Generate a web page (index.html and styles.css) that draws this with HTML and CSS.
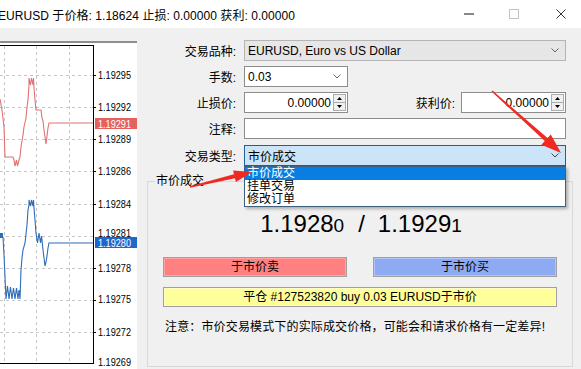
FILE: index.html
```html
<!DOCTYPE html>
<html lang="zh-CN">
<head>
<meta charset="utf-8">
<title>EURUSD</title>
<link rel="stylesheet" href="styles.css">
</head>
<body>
<div class="titlebar">
  <span class="title">EURUSD 于价格: 1.18624 止损: 0.00000 获利: 0.00000</span>
  <div class="controls">
    <svg class="ctl-min" width="10" height="2" viewBox="0 0 10 2"><line x1="0" y1="1" x2="10" y2="1" stroke="#111" stroke-width="1"/></svg>
    <svg class="ctl-max" width="10" height="10" viewBox="0 0 10 10"><rect x="0.5" y="0.5" width="9" height="9" fill="none" stroke="#c4c4c4" stroke-width="1"/></svg>
    <svg class="ctl-close" width="10" height="10" viewBox="0 0 10 10"><path d="M0.5 0.5 L9.5 9.5 M9.5 0.5 L0.5 9.5" stroke="#333" stroke-width="1" fill="none"/></svg>
  </div>
</div>
<div class="main">
  <div class="chart">
    <svg class="chart-svg" width="137" height="328" viewBox="0 41 137 328">
      <rect x="0" y="41" width="137" height="328" fill="#fff"/>
      <rect x="0" y="41" width="137" height="2" fill="#8e8e8e"/>
      <g stroke="#c6c6c6" stroke-width="1" stroke-dasharray="3,3" fill="none">
        <line x1="0" y1="75.5" x2="93" y2="75.5"/>
        <line x1="0" y1="107.5" x2="93" y2="107.5"/>
        <line x1="0" y1="139.5" x2="93" y2="139.5"/>
        <line x1="0" y1="171.5" x2="93" y2="171.5"/>
        <line x1="0" y1="204.5" x2="93" y2="204.5"/>
        <line x1="0" y1="236.5" x2="93" y2="236.5"/>
        <line x1="0" y1="268.5" x2="93" y2="268.5"/>
        <line x1="0" y1="300.5" x2="93" y2="300.5"/>
        <line x1="0" y1="332.5" x2="93" y2="332.5"/>
        <line x1="4.5" y1="46" x2="4.5" y2="363"/>
        <line x1="36.5" y1="46" x2="36.5" y2="363"/>
        <line x1="69.5" y1="46" x2="69.5" y2="363"/>
      </g>
      <g stroke="#000" stroke-width="1" fill="none">
        <line x1="0" y1="45.5" x2="94" y2="45.5"/>
        <line x1="93.5" y1="45" x2="93.5" y2="364"/>
        <line x1="0" y1="363.5" x2="94" y2="363.5"/>
        <line x1="93" y1="75.5" x2="96" y2="75.5"/>
        <line x1="93" y1="107.5" x2="96" y2="107.5"/>
        <line x1="93" y1="139.5" x2="96" y2="139.5"/>
        <line x1="93" y1="171.5" x2="96" y2="171.5"/>
        <line x1="93" y1="204.5" x2="96" y2="204.5"/>
        <line x1="93" y1="268.5" x2="96" y2="268.5"/>
        <line x1="93" y1="300.5" x2="96" y2="300.5"/>
        <line x1="93" y1="332.5" x2="96" y2="332.5"/>
      </g>
      <polyline fill="none" stroke="#e07272" stroke-width="1.1" points="0,99 2,110 4,127 5,157 13,157 14,160 15,166 16.5,160 17.5,166 19,160 20,157 21,147 23,135 24,127 26,118 27,107 28,100 29,85 29,78 30.5,85 31.5,78 33,85 33.5,78 34,88 35,100 36,110 41,110 42,118 43,121 44,130 45,137 46,144 47,136 48,128 49,123 93,123"/>
      <rect x="0" y="233" width="3" height="5" fill="#2f6cb8"/>
      <polyline fill="none" stroke="#2f6cb8" stroke-width="1.1" points="0,235 3,237 4,255 5,277 6,299 7.5,286 9,299 10.5,287 12,299 13.5,288 15,299 16.5,288 18,299 19,290 20,299 21,270 22,258 23,250 25,243 27,225 28,210 29,205 29,200 30.5,206 31.5,200 33,206 33.5,200 34,208 35,220 36,233 37.5,243 39,233 40.5,243 41.5,236 42,240 43,250 44,258 45,266 46,262 47,256 48,248 49,243 93,243"/>
      <g class="axis" font-size="10.5" fill="#000">
        <text x="98" y="79" textLength="33" lengthAdjust="spacingAndGlyphs">1.19295</text>
        <text x="98" y="111" textLength="33" lengthAdjust="spacingAndGlyphs">1.19292</text>
        <text x="98" y="143" textLength="33" lengthAdjust="spacingAndGlyphs">1.19289</text>
        <text x="98" y="175" textLength="33" lengthAdjust="spacingAndGlyphs">1.19286</text>
        <text x="98" y="208" textLength="33" lengthAdjust="spacingAndGlyphs">1.19284</text>
        <text x="98" y="237" textLength="33" lengthAdjust="spacingAndGlyphs">1.19281</text>
        <text x="98" y="272" textLength="33" lengthAdjust="spacingAndGlyphs">1.19278</text>
        <text x="98" y="303" textLength="33" lengthAdjust="spacingAndGlyphs">1.19275</text>
        <text x="98" y="336" textLength="33" lengthAdjust="spacingAndGlyphs">1.19272</text>
        <text x="98" y="366" textLength="33" lengthAdjust="spacingAndGlyphs">1.19269</text>
      </g>
      <rect x="95" y="118" width="42" height="11" fill="#e4615e"/>
      <text class="axis" x="98" y="127.5" font-size="10.5" fill="#fff" textLength="33" lengthAdjust="spacingAndGlyphs">1.19291</text>
      <rect x="95" y="237" width="42" height="11" fill="#1f66cc"/>
      <text class="axis" x="98" y="246.5" font-size="10.5" fill="#fff" textLength="33" lengthAdjust="spacingAndGlyphs">1.19280</text>
    </svg>
  </div>
  <div class="panel">
    <div class="form">
      <div class="row">
        <span class="lbl">交易品种:</span>
        <div class="field combo disabled wide"><span class="val">EURUSD, Euro vs US Dollar</span><svg class="chev" width="8" height="5" viewBox="0 0 8 5"><polyline points="0.5,0.5 4,4 7.5,0.5" fill="none" stroke="#666" stroke-width="1"/></svg></div>
      </div>
      <div class="row">
        <span class="lbl">手数:</span>
        <div class="field combo narrow"><span class="val">0.03</span><svg class="chev" width="8" height="5" viewBox="0 0 8 5"><polyline points="0.5,0.5 4,4 7.5,0.5" fill="none" stroke="#666" stroke-width="1"/></svg></div>
      </div>
      <div class="row">
        <span class="lbl">止损价:</span>
        <div class="field spin narrow"><span class="num">0.00000</span><svg class="spinner" width="13" height="17" viewBox="0 0 13 17"><rect x="0.5" y="0.5" width="12" height="16" fill="#f0f0f0" stroke="#acacac"/><line x1="1" y1="8.5" x2="12" y2="8.5" stroke="#acacac"/><polygon points="6.5,3 9,6 4,6" fill="#000"/><polygon points="4,11 9,11 6.5,14" fill="#000"/></svg></div>
        <span class="lbl2">获利价:</span>
        <div class="field spin narrow2"><span class="num">0.00000</span><svg class="spinner" width="13" height="17" viewBox="0 0 13 17"><rect x="0.5" y="0.5" width="12" height="16" fill="#f0f0f0" stroke="#acacac"/><line x1="1" y1="8.5" x2="12" y2="8.5" stroke="#acacac"/><polygon points="6.5,3 9,6 4,6" fill="#000"/><polygon points="4,11 9,11 6.5,14" fill="#000"/></svg></div>
      </div>
      <div class="row">
        <span class="lbl">注释:</span>
        <div class="field wide"></div>
      </div>
      <div class="row row-type">
        <span class="lbl">交易类型:</span>
        <div class="field combo focused wide"><span class="val">市价成交</span><svg class="chev" width="8" height="5" viewBox="0 0 8 5"><polyline points="0.5,0.5 4,4 7.5,0.5" fill="none" stroke="#444" stroke-width="1"/></svg></div>
        <ul class="dropdown">
          <li class="sel">市价成交</li>
          <li>挂单交易</li>
          <li>修改订单</li>
        </ul>
      </div>
    </div>
    <div class="group">
      <span class="legend">市价成交</span>
      <div class="price">1.1928<span class="small">0</span><span class="sep">/</span>1.1929<span class="small">1</span></div>
      <div class="btns">
        <div class="btn sell">于市价卖</div>
        <div class="btn buy">于市价买</div>
      </div>
      <div class="btn close">平仓 #127523820 buy 0.03 EURUSD于市价</div>
      <p class="note">注意：市价交易模式下的实际成交价格，可能会和请求价格有一定差异!</p>
    </div>
  </div>
</div>
<svg class="arrows" width="581" height="369" viewBox="0 0 581 369">
  <polygon fill="#ee2a22" points="491.5,91.5 544.8,141.1 541.4,144.8 561,153 550.8,134.4 547.5,138.1 492.5,90.5"/>
  <polygon fill="#ee2a22" points="190.2,187.7 235,178.2 235.9,182.1 252,172 233.1,170.4 234,174.3 189.8,186.3"/>
</svg>
</body>
</html>
```
FILE: styles.css
```css
* { box-sizing: border-box; }
html, body { margin: 0; padding: 0; }
body {
  width: 581px;
  height: 369px;
  overflow: hidden;
  position: relative;
  background: #f0f0f0;
  color: #000;
  font-family: "Liberation Sans", "Noto Sans CJK SC", sans-serif;
  font-size: 12px;
}
.titlebar {
  height: 28px;
  background: #fff;
  display: flex;
  align-items: center;
}
.title {
  flex: 1;
  margin-left: -2px;
  white-space: nowrap;
  font-size: 12px;
  letter-spacing: 0.05px;
}
.controls {
  display: flex;
  align-items: center;
  padding-right: 15px;
}
.controls svg { display: block; }
.ctl-max { margin-left: 35px; }
.ctl-close { margin-left: 37px; }

.main {
  display: flex;
  height: 341px;
}
.chart {
  width: 137px;
  padding-top: 13px;
  flex: none;
}
.chart-svg { display: block; }
.axis { font-family: "Liberation Sans", sans-serif; }

.panel {
  flex: 1;
  position: relative;
}
.form {
  padding-top: 12px;
  display: flex;
  flex-direction: column;
  gap: 5px;
}
.row {
  display: flex;
  align-items: center;
  height: 21px;
  position: relative;
}
.row-type { margin-top: 1px; }
.lbl {
  width: 99px;
  margin-right: 8px;
  text-align: right;
  white-space: nowrap;
}
.lbl2 {
  width: 107px;
  margin-right: 6px;
  text-align: right;
  white-space: nowrap;
}
.field {
  height: 21px;
  border: 1px solid #8c8c8c;
  background: #fff;
  display: flex;
  align-items: center;
  padding-left: 3px;
}
.wide { width: 322px; }
.narrow { width: 104px; }
.narrow2 { width: 105px; }
.combo .val { flex: 1; white-space: nowrap; }
.combo .chev { margin-right: 6px; display: block; }
.disabled {
  background: #e6e6e6;
  border-color: #b4b4b4;
}
.focused {
  background: #cce4f7;
  border-color: #1f5f9c;
}
.spin { justify-content: flex-end; padding-right: 1px; }
.spin .num { margin-right: 2px; }
.spinner { display: block; }

.dropdown {
  position: absolute;
  left: 107px;
  top: 21px;
  width: 322px;
  margin: 0;
  padding: 0;
  list-style: none;
  background: #fff;
  border: 1px solid #3d5f80;
  box-shadow: 2px 2px 3px rgba(0, 0, 0, 0.28);
  z-index: 5;
}
.dropdown li {
  height: 13px;
  line-height: 13px;
  padding-left: 2px;
  white-space: nowrap;
}
.dropdown li.sel {
  background: #0a7ee0;
  color: #fff;
}

.group {
  position: relative;
  margin: 15px 8px 0 10px;
  height: 186px;
  border: 1px solid #d8d8d8;
  padding: 0 15px;
}
.legend {
  position: absolute;
  top: -8px;
  left: 7px;
  padding: 0 1px;
  line-height: 14px;
  background: #f0f0f0;
}
.price {
  margin-top: 28px;
  height: 28px;
  line-height: 28px;
  text-align: center;
  font-size: 24px;
  white-space: nowrap;
  padding-left: 2px;
}
.price .small { font-size: 19px; }
.price .sep { margin: 0 13px 0 14px; }
.btns {
  margin-top: 19px;
  display: flex;
  gap: 26px;
}
.btn {
  height: 20px;
  line-height: 18px;
  text-align: center;
  border: 1px solid #a0a0a0;
  white-space: nowrap;
}
.btns .btn { width: 184px; }
.sell {
  background: #ff8080;
  box-shadow: inset 0 0 0 1px #ffa2a2;
}
.buy {
  background: #8eaaf2;
  box-shadow: inset 0 0 0 1px #b0c4f6;
}
.close {
  margin-top: 10px;
  width: 394px;
  background: #ffff99;
  box-shadow: inset 0 0 0 1px #ffffc4;
}
.note {
  margin: 12px 0 0 2px;
  line-height: 16px;
  white-space: nowrap;
  letter-spacing: 0.15px;
}
.arrows {
  position: absolute;
  left: 0;
  top: 0;
  pointer-events: none;
  z-index: 10;
}
```
